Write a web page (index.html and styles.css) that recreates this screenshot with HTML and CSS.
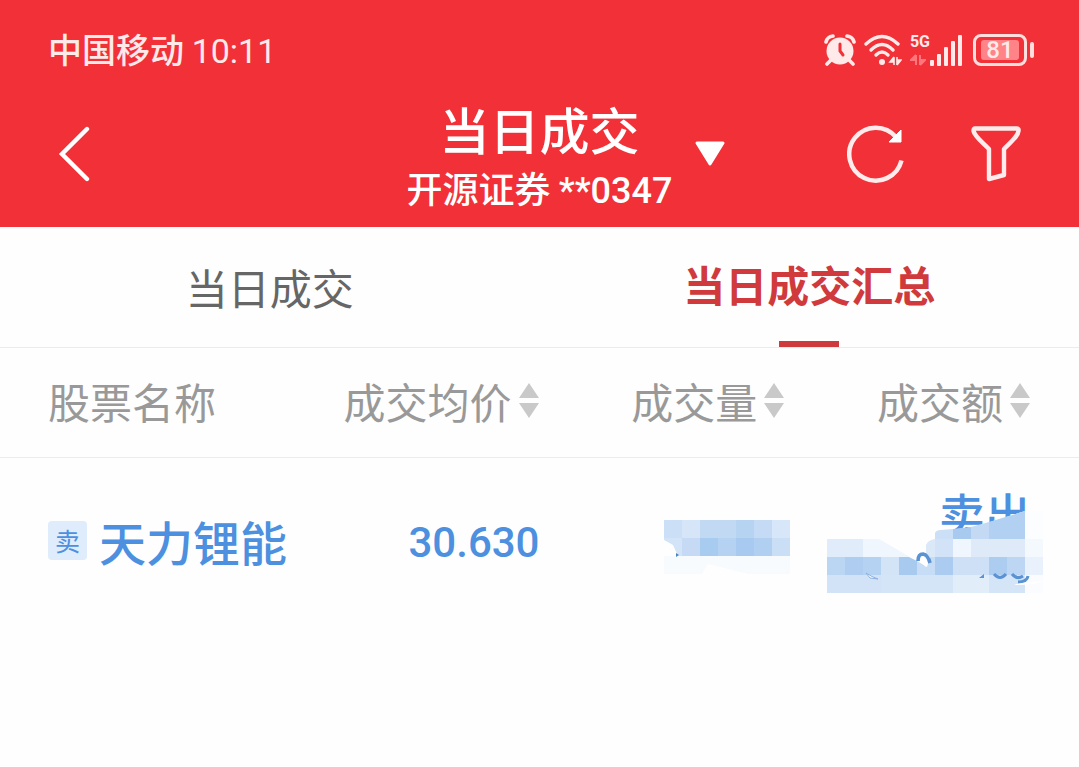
FILE: index.html
```
<!DOCTYPE html>
<html lang="zh-CN">
<head>
  <meta charset="UTF-8">
  <meta name="viewport" content="width=device-width, initial-scale=1.0">
  <title>当日成交</title>
  <link rel="stylesheet" href="styles.css">
</head>
<body>

<header class="header">
  <!-- Phone status bar -->
  <div class="status-bar">
    <div class="carrier">中国移动 <span class="num">10:11</span></div>
    <div class="status-icons">
      <svg width="32" height="32" viewBox="0 0 32 32">
        <circle cx="16" cy="17" r="13.500" fill="#ffe9e9"/>
        <path d="M2 8A8 8 0 0 1 9 2M23 2A8 8 0 0 1 30 8M7 26L3 30M25 26L29 30" fill="none" stroke="#ffe9e9" stroke-width="3.600" stroke-linecap="round"/>
        <path d="M16 10V17L19 21" fill="none" stroke="#f23038" stroke-width="3" stroke-linecap="round"/>
      </svg>
      <svg width="38" height="32" viewBox="0 0 38 32">
        <g fill="none" stroke="#ffe9e9" stroke-width="3.400" stroke-linecap="round">
          <path d="M2 10Q18 -5 34 10"/>
          <path d="M7 16Q18 5 29 16"/>
          <path d="M12 21Q18 15 24 21"/>
        </g>
        <circle cx="18" cy="28" r="3" fill="#ffe9e9"/>
        <path d="M30 23V31M30 23L26 28H30M33 31V23M33 31L37 26H33" fill="#ffe9e9" stroke="#ffe9e9" stroke-width="1.600"/>
      </svg>
      <div class="signal">
        <div class="signal-type">
          <span>5G</span>
          <svg width="16" height="12" viewBox="0 0 16 12">
            <path d="M6 1V11M6 1L1 6H6M10 11V1M10 11L15 6H10" fill="#ff777d" stroke="#ff777d" stroke-width="2"/>
          </svg>
        </div>
        <svg width="33" height="32" viewBox="0 0 33 32" fill="#ffe9e9">
          <rect x="0" y="26" width="4" height="6" rx="1"/>
          <rect x="7" y="20" width="4" height="12" rx="1"/>
          <rect x="14" y="13" width="4" height="19" rx="1"/>
          <rect x="21" y="7" width="4" height="25" rx="1"/>
          <rect x="28" y="1" width="4" height="31" rx="1"/>
        </svg>
      </div>
      <div class="battery"><span>81</span></div>
    </div>
  </div>

  <!-- Title bar -->
  <div class="nav">
    <div class="nav-left">
      <button class="icon-button" aria-label="返回">
        <svg width="34" height="56" viewBox="0 0 34 56">
          <path d="M29 3L4 28L29 53" fill="none" stroke="#fff" stroke-width="4.400" stroke-linecap="round"/>
        </svg>
      </button>
    </div>
    <div class="nav-title">
      <h1>当日成交</h1>
      <p>开源证券 <span class="num">**0347</span></p>
    </div>
    <div class="nav-right">
      <button class="icon-button" aria-label="切换账户">
        <svg width="32" height="26" viewBox="0 0 32 26">
          <path d="M3 2H29L16 23Z" fill="#fff" stroke="#fff" stroke-width="3" stroke-linejoin="round"/>
        </svg>
      </button>
      <div class="nav-actions">
        <button class="icon-button" aria-label="刷新">
          <svg width="58" height="60" viewBox="0 0 58 60">
            <path d="M54.500 36.500A26.500 26.500 0 1 1 49 13" fill="none" stroke="#ffebeb" stroke-width="4.500"/>
            <path d="M54 6V18H42Z" fill="#fff" stroke="#fff" stroke-width="1"/>
          </svg>
        </button>
        <button class="icon-button" aria-label="筛选">
          <svg width="50" height="56" viewBox="0 0 50 56">
            <path d="M4 2.500H46Q48 2.500 47.500 5C47 10 42 14 33 23V49L18 53V23C9 14 3.500 10 2.500 5Q2.500 2.500 4 2.500Z" fill="none" stroke="#ffebeb" stroke-width="4.400" stroke-linejoin="round"/>
          </svg>
        </button>
      </div>
    </div>
  </div>
</header>

<nav class="tabs">
  <a class="tab" href="#deals">当日成交</a>
  <a class="tab active" href="#summary">当日成交汇总</a>
</nav>

<table class="deal-table">
  <thead>
    <tr>
      <th class="edge"></th>
      <th class="name">股票名称</th>
      <th>
        <button class="sort">成交均价<svg width="22" height="36" viewBox="0 0 22 36"><path d="M11 0L21 15H1ZM1 20H21L11 35Z" fill="#c9c9c9"/></svg></button>
      </th>
      <th>
        <button class="sort">成交量<svg width="22" height="36" viewBox="0 0 22 36"><path d="M11 0L21 15H1ZM1 20H21L11 35Z" fill="#c9c9c9"/></svg></button>
      </th>
      <th>
        <button class="sort">成交额<svg width="22" height="36" viewBox="0 0 22 36"><path d="M11 0L21 15H1ZM1 20H21L11 35Z" fill="#c9c9c9"/></svg></button>
      </th>
      <th class="edge"></th>
    </tr>
  </thead>
  <tbody>
    <tr>
      <td></td>
      <td class="name">
        <div class="stock"><span class="badge">卖</span>天力锂能</div>
      </td>
      <td class="num price">30.630</td>
      <td class="masked">
        <!-- Masked volume -->
        <svg class="mask mask-volume" width="126" height="56" viewBox="0 0 126 56" role="img" aria-label="已隐藏">
          <path d="M0 0H18V18H0Z" fill="#cbdff6"/>
          <path d="M0 18H18V36H14L9 25L0 20Z" fill="#d3e4f8"/>
          <rect x="18" y="0" width="18" height="18" fill="#d6e5f7"/>
          <rect x="36" y="0" width="36" height="18" fill="#c2d9f4"/>
          <rect x="72" y="0" width="18" height="18" fill="#b6d3f2"/>
          <rect x="90" y="0" width="18" height="18" fill="#c5dbf5"/>
          <rect x="108" y="0" width="18" height="18" fill="#d7e6f8"/>
          <rect x="18" y="18" width="18" height="18" fill="#c6daf5"/>
          <rect x="36" y="18" width="18" height="18" fill="#a8cbf0"/>
          <rect x="54" y="18" width="18" height="18" fill="#b5d2f2"/>
          <rect x="72" y="18" width="18" height="18" fill="#a8caf0"/>
          <rect x="90" y="18" width="18" height="18" fill="#b1d0f1"/>
          <rect x="108" y="18" width="18" height="18" fill="#cadff6"/>
          <path d="M0 36H126V54H84L44 44L38 54H0Z" fill="#f8fbfe"/>
          <path d="M12 33L15 35L12 37Z" fill="#4a83c4"/>
        </svg>
      </td>
      <td class="masked">
        <span class="side">卖出</span>
        <!-- Masked amount -->
        <svg class="mask mask-amount" width="216" height="82" viewBox="0 0 216 82" role="img" aria-label="已隐藏">
          <path d="M108 82V22Q109 19 114 19L144 17L198 0H216V82Z" fill="#fff"/>
          <path d="M108 28V22Q109 19 114 19L126 18V28Z" fill="#cbdff6"/>
          <path d="M126 18L144 16V28H126Z" fill="#a9caef"/>
          <path d="M144 16L162 11V28H144Z" fill="#c4daf4"/>
          <path d="M162 11L198 0V28H162Z" fill="#b2d0f1"/>
          <path d="M198 0H216V28H198Z" fill="#fbfdff"/>
          <rect x="0" y="28" width="36" height="18" fill="#e0ecf9"/>
          <path d="M36 28H52L83 46H36Z" fill="#f0f6fd"/>
          <path d="M99 46V34Q101 29 108 28V46Z" fill="#dbe8f8"/>
          <rect x="108" y="28" width="18" height="18" fill="#d3e3f7"/>
          <rect x="126" y="28" width="18" height="18" fill="#f0f6fd"/>
          <rect x="144" y="28" width="54" height="18" fill="#dfeaf9"/>
          <rect x="198" y="28" width="18" height="18" fill="#f4f9fe"/>
          <rect x="0" y="46" width="18" height="18" fill="#bbd6f3"/>
          <rect x="18" y="46" width="18" height="18" fill="#aecdf1"/>
          <rect x="36" y="46" width="18" height="18" fill="#b5d2f2"/>
          <rect x="54" y="46" width="18" height="18" fill="#d3e4f7"/>
          <path d="M72 46H82L90 50V64H72Z" fill="#a9caef"/>
          <path d="M90 50L100 56L103 46H108V64H90Z" fill="#c7dcf5"/>
          <rect x="108" y="46" width="18" height="18" fill="#abcbf0"/>
          <rect x="126" y="46" width="36" height="18" fill="#cee0f6"/>
          <rect x="162" y="46" width="18" height="18" fill="#acccf0"/>
          <rect x="180" y="46" width="18" height="18" fill="#bdd6f4"/>
          <rect x="198" y="46" width="18" height="18" fill="#e9f2fc"/>
          <rect x="0" y="64" width="54" height="18" fill="#d2e3f7"/>
          <rect x="54" y="64" width="72" height="18" fill="#d5e5f8"/>
          <rect x="126" y="64" width="36" height="18" fill="#e2edfa"/>
          <rect x="162" y="64" width="36" height="18" fill="#d4e5f8"/>
          <rect x="198" y="64" width="18" height="18" fill="#fafcff"/>
          <path d="M91 50Q91 43 96 43Q101 44 103 52" fill="none" stroke="#5a92d3" stroke-width="3.600"/>
          <path d="M93 50Q94 45 98 46Q101 50 99 56Z" fill="#fff"/>
          <path d="M39 62Q45 66 51 68L43 67Z" fill="#fff" stroke="#8bb2e2" stroke-width="1"/>
          <path d="M152 67L157 63V67Z" fill="#5a92d3"/>
          <path d="M167 63Q173 70 179 63M185 63Q190 69 196 65M201 65Q200 71 191 71" fill="none" stroke="#5a92d3" stroke-width="3"/>
          <path d="M187 74Q194 71 216 70Q208 74 187 74Z" fill="#fff"/>
        </svg>
      </td>
      <td></td>
    </tr>
  </tbody>
</table>

</body>
</html>
```
FILE: styles.css
```
body {
  margin: 0;
  background-color: #fefefe;
  font-family: "Noto Sans CJK SC", sans-serif;
}
h1, p {
  margin: 0;
}
svg {
  display: block;
}
button {
  padding: 0;
  border: none;
  background: none;
  font: inherit;
  color: inherit;
  cursor: pointer;
}
.num {
  font-family: Roboto, "Noto Sans CJK SC", sans-serif;
}

/* Header */
.header {
  background-color: #f23038;
  color: #fff;
}
.status-bar {
  display: flex;
  justify-content: space-between;
  align-items: center;
  height: 96px;
  padding: 2px 52px 0 48px;
  color: #ffe9e9;
}
.carrier {
  font-size: 34px;
  font-weight: 500;
  line-height: 50px;
}
.carrier .num {
  font-weight: 400;
}
.status-icons {
  display: flex;
  align-items: center;
  gap: 8px;
}
.signal {
  display: flex;
}
.signal-type {
  display: flex;
  flex-direction: column;
  justify-content: space-between;
  font-family: Roboto, sans-serif;
  font-size: 16px;
  font-weight: 700;
  line-height: 16px;
}
.battery {
  position: relative;
  box-sizing: border-box;
  width: 54px;
  height: 32px;
  margin-left: 2px;
  padding: 3px 5px;
  border: 3px solid #ffdede;
  border-radius: 8px;
  font-family: Roboto, sans-serif;
  font-size: 24px;
  font-weight: 500;
  line-height: 20px;
  text-align: center;
}
.battery span {
  display: block;
  border-radius: 3px;
  background-color: #ff8387;
}
.battery::after {
  content: "";
  position: absolute;
  top: 5px;
  right: -10px;
  width: 4px;
  height: 16px;
  border-radius: 2px;
  background-color: #ffdede;
}
.nav {
  display: grid;
  grid-template-columns: 1fr auto 1fr;
  align-items: center;
  padding: 0 58px;
}
.nav-title {
  padding-bottom: 7px;
  text-align: center;
}
.nav-title h1 {
  font-size: 50px;
  font-weight: 500;
  line-height: 60px;
}
.nav-title p {
  font-size: 36px;
  font-weight: 500;
  line-height: 58px;
}
.nav-left,
.nav-right {
  display: flex;
  justify-content: space-between;
  align-items: center;
  padding-bottom: 18px;
}
.nav-right {
  padding-left: 22px;
}
.nav-actions {
  display: flex;
  align-items: center;
  gap: 66px;
}

/* Tabs */
.tabs {
  display: flex;
  border-bottom: 1px solid #ececec;
}
.tab {
  position: relative;
  flex: 1;
  font-size: 42px;
  line-height: 120px;
  text-align: center;
  text-decoration: none;
  color: #666;
}
.tab.active {
  font-weight: 700;
  line-height: 114px;
  color: #d03a3c;
}
.tab.active::after {
  content: "";
  position: absolute;
  bottom: 0;
  left: 50%;
  width: 60px;
  height: 6px;
  margin-left: -30px;
  background-color: #cf3a3d;
}

/* Deals */
.deal-table {
  width: 100%;
  table-layout: fixed;
  border-collapse: separate;
  border-spacing: 0;
}
.deal-table th,
.deal-table td {
  padding: 0;
  text-align: right;
  white-space: nowrap;
}
.deal-table .name {
  text-align: left;
}
.deal-table .edge {
  width: 48px;
}
.deal-table th {
  height: 105px;
  padding-bottom: 4px;
  border-bottom: 1px solid #ececec;
  font-size: 42px;
  font-weight: 400;
  color: #999;
}
.deal-table td {
  height: 168px;
  color: #4c90df;
}
.sort {
  display: inline-flex;
  align-items: center;
  gap: 6px;
}
.stock {
  display: flex;
  align-items: center;
  gap: 12px;
  padding-bottom: 4px;
  font-size: 47px;
  font-weight: 500;
}
.badge {
  flex: none;
  width: 39px;
  border-radius: 4px;
  background-color: #dfecfb;
  font-size: 25px;
  font-weight: 400;
  line-height: 39px;
  text-align: center;
}
.deal-table .price {
  font-size: 42px;
  font-weight: 500;
}
.masked {
  position: relative;
}
.side {
  display: block;
  padding-bottom: 60px;
  font-size: 46px;
  font-weight: 500;
  line-height: 60px;
}
.mask {
  position: absolute;
}
.mask-volume {
  right: -5px;
  bottom: 50px;
}
.mask-amount {
  right: -12px;
  bottom: 33px;
}
```
